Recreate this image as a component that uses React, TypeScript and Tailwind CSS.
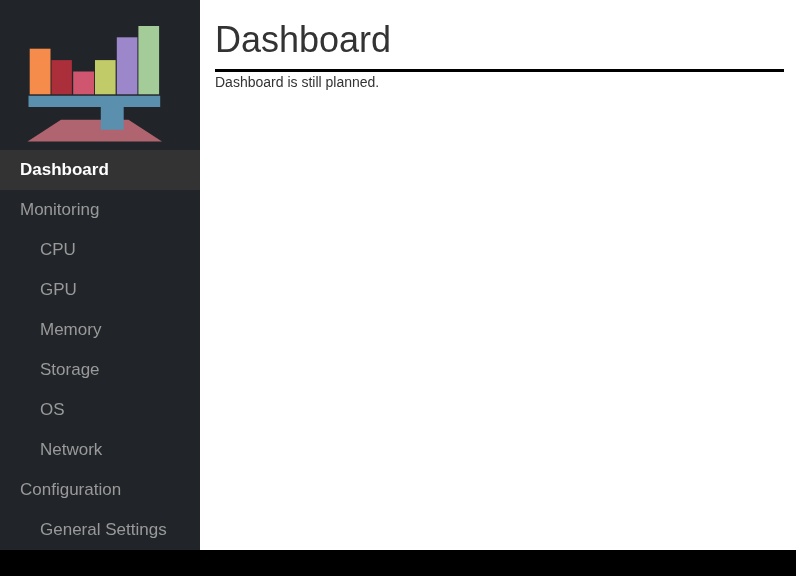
const menu = [
  { label: "Dashboard", active: true },
  { label: "Monitoring" },
  { label: "CPU", child: true },
  { label: "GPU", child: true },
  { label: "Memory", child: true },
  { label: "Storage", child: true },
  { label: "OS", child: true },
  { label: "Network", child: true },
  { label: "Configuration" },
  { label: "General Settings", child: true },
];

function Logo() {
  return (
    <svg width="200" height="150" viewBox="0 0 200 150" className="block shrink-0">
      <path d="M61 119.8H128.5L162 141.5H27.5Z" fill="#b0646f" />
      <rect x="29.7" y="48.7" width="20.8" height="45.6" fill="#f58c4b" />
      <rect x="51.5" y="60.1" width="20.4" height="34.2" fill="#aa2f3a" />
      <rect x="73.2" y="71.5" width="20.9" height="22.8" fill="#cf566e" />
      <rect x="95" y="60.1" width="20.6" height="34.2" fill="#c1cb67" />
      <rect x="116.8" y="37.3" width="20.6" height="57" fill="#9c87cb" />
      <rect x="138.4" y="26" width="20.7" height="68.3" fill="#a3cc98" />
      <path d="M28.5 95.7H160.2V106.9H123.7V129.8H100.8V106.9H28.5Z" fill="#5a8fae" />
    </svg>
  );
}

export default function App() {
  return (
    <div className="flex h-[576px] w-[796px] flex-col overflow-hidden bg-black font-['Liberation_Sans',Arial,sans-serif] will-change-transform">
      <div className="flex h-[550px]">
        <aside className="flex w-[200px] flex-col bg-[#212529]">
          <Logo />
          <nav className="flex flex-col text-[17px] leading-[40px]">
            {menu.map((m) => (
              <a
                key={m.label}
                className={`block h-10 ${m.child ? "pl-10" : "pl-5"} ${m.active ? "bg-[#333333] font-bold text-white" : "text-[#999999]"}`}
              >
                {m.label}
              </a>
            ))}
          </nav>
        </aside>
        <main className="flex-1 bg-white pt-5 pr-3 pl-[15px] text-[#333333]">
          <h1 className="h-[49px] text-[36px] leading-[40px]">Dashboard</h1>
          <hr className="h-[3px] border-0 bg-black" />
          <p className="text-sm leading-5">Dashboard is still planned.</p>
        </main>
      </div>
    </div>
  );
}
